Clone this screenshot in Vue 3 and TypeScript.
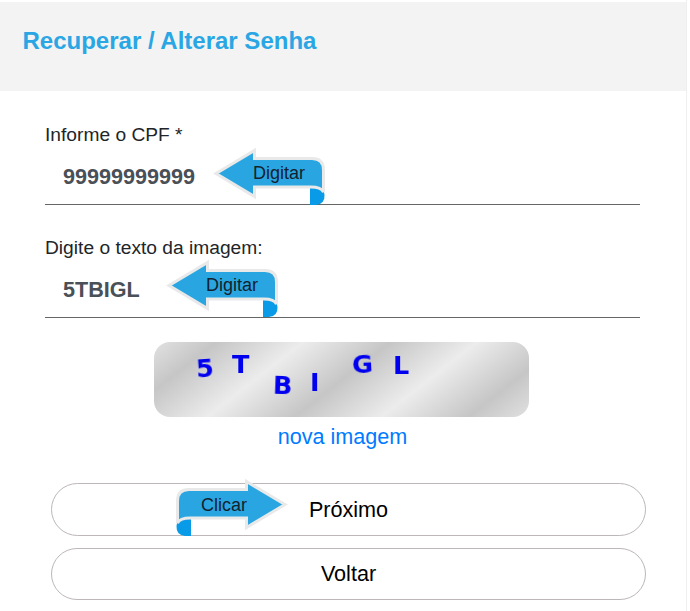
<script setup lang="ts">
interface Letter { ch: string; x: number; y: number; rot: number }
const letters: Letter[] = [
  { ch: '5', x: 42, y: 12, rot: -4 },
  { ch: 'T', x: 78, y: 8, rot: 0 },
  { ch: 'B', x: 119, y: 29, rot: 2 },
  { ch: 'I', x: 156, y: 26, rot: 0 },
  { ch: 'G', x: 198, y: 8, rot: -3 },
  { ch: 'L', x: 239, y: 9, rot: 0 },
]
</script>

<template>
  <div class="page">
    <svg width="0" height="0" class="defs" aria-hidden="true">
      <symbol id="ribbon" viewBox="0 0 110 56" overflow="visible">
        <path class="curl" d="M95 56 V38 H108 L109.5 46 Q110 55 101 56 Z" />
        <path class="shape" d="M1 24.5 L39.5 1.5 V9.5 H97 Q108.5 9.5 108.5 21 V43 Q106 38 96 38 H39.5 V47.5 Z" />
      </symbol>
    </svg>
    <header class="head"><h1>Recuperar / Alterar Senha</h1></header>
    <main class="body">
      <div class="field">
        <label>Informe o CPF *</label>
        <div class="value">99999999999</div>
        <div class="tip tip-a">
          <svg class="ribbon" width="110" height="56"><use href="#ribbon" /></svg>
          <span>Digitar</span>
        </div>
      </div>
      <div class="field second">
        <label>Digite o texto da imagem:</label>
        <div class="value">5TBIGL</div>
        <div class="tip tip-b">
          <svg class="ribbon" width="110" height="56"><use href="#ribbon" /></svg>
          <span>Digitar</span>
        </div>
      </div>
      <div class="captcha">
        <span
          v-for="l in letters"
          :key="l.ch"
          class="glyph"
          :style="{ left: l.x + 'px', top: l.y + 'px', transform: `rotate(${l.rot}deg)` }"
        >{{ l.ch }}</span>
      </div>
      <a class="link">nova imagem</a>
      <div class="actions">
        <button class="btn">
          Próximo
          <span class="tip tip-c">
            <svg class="ribbon flip" width="110" height="56"><use href="#ribbon" /></svg>
            <span>Clicar</span>
          </span>
        </button>
        <button class="btn low">Voltar</button>
      </div>
    </main>
  </div>
</template>

<style>
html, body { margin: 0; background: #fff; overflow: hidden; }
#ribbon .shape {
  fill: #29a6e1;
  stroke: #e9e9e9;
  stroke-width: 3;
}
#ribbon .curl { fill: #0a9be8; }
</style>

<style scoped>
.page {
  width: 687px;
  height: 611px;
  box-sizing: border-box;
  padding-top: 2px;
  border-right: 1px solid #efefef;
  font-family: "Liberation Sans", Arial, sans-serif;
  color: #212529;
}
.defs { position: absolute; }
.head {
  height: 89px;
  background: #f3f3f3;
  padding: 26px 0 0 22.5px;
  box-sizing: border-box;
}
.head h1 {
  margin: 0;
  font-size: 24px;
  line-height: 26px;
  font-weight: 700;
  color: #29a6e3;
}
.body {
  padding: 32px 46px 0 45px;
  display: flex;
  flex-direction: column;
  align-items: stretch;
}
.field {
  position: relative;
  height: 81px;
  border-bottom: 1px solid #666;
}
.field.second { margin-top: 31px; }
.field label {
  display: block;
  font-size: 19.2px;
  line-height: 24px;
}
.value {
  margin-top: 15px;
  padding-left: 18px;
  font-size: 21.6px;
  line-height: 30px;
  font-weight: 700;
  color: #495057;
}
.tip {
  position: absolute;
  width: 110px;
  height: 56px;
  font-size: 18px;
  color: #14222e;
}
.tip span {
  position: absolute;
  left: 38px;
  top: 0;
  width: 52px;
  text-align: center;
  line-height: 48px;
}
.tip-a { left: 170px; top: 26px; }
.tip-b { left: 123px; top: 25px; }
.tip-c { left: 124px; top: -4px; }
.tip-c span { left: 22px; top: 1px; }
.ribbon { display: block; overflow: visible; }
.flip { transform: scaleX(-1); }
.captcha {
  position: relative;
  align-self: flex-start;
  margin: 24px 0 0 109px;
  width: 375px;
  height: 75px;
  border-radius: 16px;
  overflow: hidden;
  background: repeating-linear-gradient(
    -38deg,
    #c6c6c6 37.5px,
    #ececec 91px,
    #c6c6c6 144.5px
  );
}
.glyph {
  position: absolute;
  font-family: "DejaVu Sans", sans-serif;
  font-weight: 700;
  font-size: 25.5px;
  line-height: 28px;
  color: #0000ee;
  filter: blur(0.3px);
}
.link {
  align-self: center;
  margin-top: 8px;
  font-size: 21.6px;
  line-height: 24px;
  color: #007bff;
}
.actions {
  margin: 34px -6px 0 6px;
  display: flex;
  flex-direction: column;
  gap: 12px;
}
.btn {
  position: relative;
  height: 53px;
  border: 1px solid #bdb7b7;
  border-radius: 27px;
  background: #fff;
  font-family: inherit;
  font-size: 21.6px;
  color: #000;
  padding: 0;
}
.btn.low { height: 52px; }
</style>
